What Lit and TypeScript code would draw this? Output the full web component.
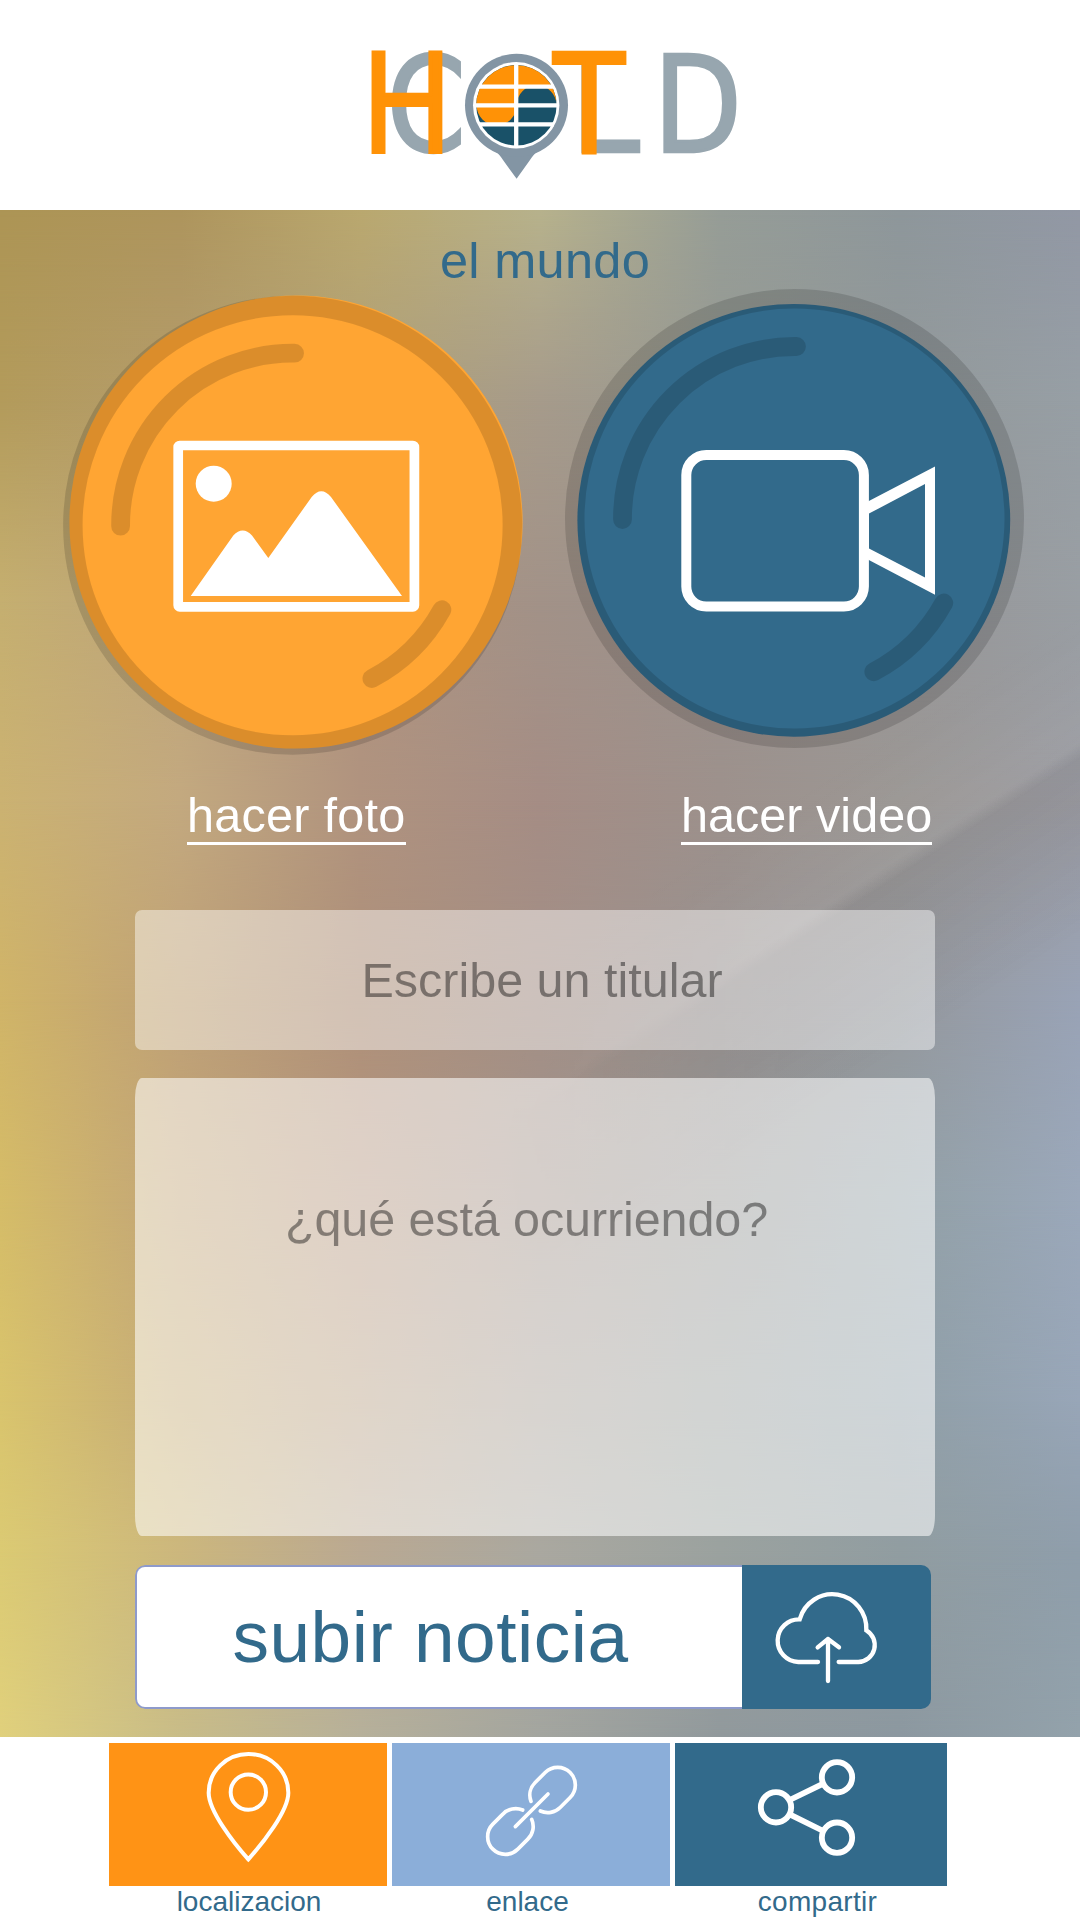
import { LitElement, html, css, svg } from "lit";
import { customElement, property } from "lit/decorators.js";
import { styleMap } from "lit/directives/style-map.js";

/* Colour rows of the backdrop: vertical position (px) and stops at every 1/6 of the width. */
const ROWS: { y: number; stops: string[] }[] = [
  { y: 0, stops: ["#ad9555", "#ae955d", "#baa86f", "#b7b28c", "#969d97", "#8e979b", "#9298a5"] },
  { y: 190, stops: ["#b39b5b", "#b49c6c", "#b0a078", "#a69b8b", "#979a93", "#93999a", "#979fa5"] },
  { y: 390, stops: ["#c5af70", "#bda47b", "#af937e", "#a29288", "#9a928e", "#979697", "#999ea3"] },
  { y: 590, stops: ["#cbb272", "#c3a97f", "#b0937f", "#a58d85", "#9d918c", "#9b9794", "#9b9ba1"] },
  { y: 790, stops: ["#d0b468", "#bfa176", "#ae9079", "#a38f86", "#979190", "#95989d", "#99a3b6"] },
  { y: 990, stops: ["#d5bc68", "#c2a578", "#b5967f", "#a2938a", "#969694", "#92a0a6", "#9ba8ba"] },
  { y: 1190, stops: ["#d9c46d", "#c6ac77", "#b8a084", "#a69d94", "#989e9c", "#909fa7", "#98a6b8"] },
  { y: 1340, stops: ["#dbca73", "#ccb77d", "#baa992", "#aaa8a0", "#9ba29f", "#919da1", "#8f9eab"] },
  { y: 1527, stops: ["#e0d07c", "#c8bc88", "#b6b09a", "#a3a59f", "#91999c", "#8c98a0", "#93a2ab"] },
];

@customElement("hc-backdrop")
export class HcBackdrop extends LitElement {
  static styles = css`
    :host { display: block; position: absolute; inset: 0; overflow: hidden; }
    .row { position: absolute; left: 0; right: 0; bottom: 0; }
    .edge { position: absolute; inset: 0; width: 1080px; height: 1527px; }
  `;
  render() {
    return html`
      ${ROWS.map((r, i) => {
        const from = i === 0 ? 0 : ROWS[i - 1].y;
        const mask = i === 0 ? "none" : `linear-gradient(to bottom, transparent 0, #000 ${r.y - from}px)`;
        return html`<div class="row" style=${styleMap({
          top: `${from}px`,
          background: `linear-gradient(to right, ${r.stops.join(",")})`,
          maskImage: mask,
        })}></div>`;
      })}
      <svg class="edge" viewBox="0 210 1080 1527">
        <defs>
          <linearGradient id="fall" gradientUnits="userSpaceOnUse" x1="859" y1="884" x2="948" y2="1021">
            <stop offset="0" stop-color="#20202c" stop-opacity="0" />
            <stop offset=".09" stop-color="#20202c" stop-opacity=".065" />
            <stop offset="1" stop-color="#20202c" stop-opacity="0" />
          </linearGradient>
          <linearGradient id="glow" gradientUnits="userSpaceOnUse" x1="867" y1="896" x2="800" y2="792">
            <stop offset="0" stop-color="#fff" stop-opacity="0" />
            <stop offset=".1" stop-color="#fff" stop-opacity=".04" />
            <stop offset="1" stop-color="#fff" stop-opacity="0" />
          </linearGradient>
          <linearGradient id="side" x1="500" x2="800" y1="0" y2="0" gradientUnits="userSpaceOnUse">
            <stop offset="0" stop-color="#000" /><stop offset="1" stop-color="#fff" />
          </linearGradient>
          <mask id="m" maskUnits="userSpaceOnUse" x="0" y="210" width="1080" height="1527">
            <rect x="0" y="210" width="1080" height="1527" fill="url(#side)" />
          </mask>
        </defs>
        <g mask="url(#m)">
          <rect x="400" y="500" width="700" height="1000" fill="url(#fall)" />
          <rect x="400" y="500" width="700" height="1000" fill="url(#glow)" />
        </g>
      </svg>`;
  }
}

@customElement("hc-logo")
export class HcLogo extends LitElement {
  static styles = css`
    :host { display: block; }
    svg { display: block; width: 380px; height: 140px; overflow: visible; }
    text { font-size: 138px; }
    .cold { font-family: "DejaVu Sans", sans-serif; fill: #97a6af; stroke: #97a6af; stroke-width: 2.8px; }
    .hot { font-family: "Open Sans", sans-serif; fill: #ff9206; stroke: #ff9206; stroke-width: 4px; }
  `;
  render() {
    return html`<svg viewBox="365 45 380 140">
      <g class="cold">
        <text transform="translate(386.800 151.200) scale(.822 .96)">C</text>
        <text transform="translate(570.500 151.700) scale(.9 .975)">L</text>
        <text transform="translate(653.300 151.700) scale(.835 .975)">D</text>
      </g>
      <g class="hot">
        <text transform="translate(361.200 151.500) scale(.9 1.01)">H</text>
        <text transform="translate(552.600 151.500) scale(.965 1.01)">T</text>
      </g>
      <path d="M495 151C499 154 501 157 503 160L516.6 178.7 530 160C532 157 534 154 538 151Z" fill="#8395a4" />
      <circle cx="516.5" cy="105.3" r="51.5" fill="#8395a4" />
      <circle cx="516.2" cy="105.3" r="43.2" fill="#fff" />
      <circle cx="516.4" cy="105.3" r="40.2" fill="#195168" />
      <path d="M476.2 105.3A40.2 40.2 0 0 1 556.6 105.3A20 20 0 0 0 516.6 105.3A20 20 0 0 1 476.6 105.3Z" fill="#ff9206" />
      <path d="M516.2 64V147M479 86.700H554M475 105.3H558M479 124.300H554" stroke="#fff" stroke-width="4.300" />
    </svg>`;
  }
}

@customElement("hc-capture")
export class HcCapture extends LitElement {
  @property() kind: "foto" | "video" = "foto";
  static styles = css`
    :host { display: flex; flex-direction: column; align-items: flex-start; width: 470px; }
    svg { display: block; width: 470px; height: 470px; }
    .label {
      margin-top: 29px; font-size: 48.6px; line-height: 54px; color: #fff;
      white-space: nowrap; border-bottom: 3px solid #fff;
    }
    .foto { margin-left: 129px; letter-spacing: 0.25px; }
    .video { margin-left: 121px; }
  `;
  private gloss(cx: number, cy: number) {
    return svg`<g transform="translate(${cx} ${cy})" fill="none" stroke="#000" stroke-opacity=".14">
      <circle r="219.75" stroke-width="19.5" />
      <path d="M-172 1A172 172 0 0 1 2-172M149.3 84.5A172 172 0 0 1 79.3 153.3" stroke-width="18.8" stroke-linecap="round" />
    </g>`;
  }
  render() {
    return this.kind === "foto"
      ? html`<svg viewBox="58 289 470 470">
            <circle cx="296" cy="522" r="226.6" fill="#ffa533" />
            ${this.gloss(292.6, 525.2)}
            <rect x="178.2" y="445.5" width="236.2" height="161.3" rx="1.5" fill="none" stroke="#fff" stroke-width="9.7" stroke-linejoin="round" />
            <circle cx="213.7" cy="483.7" r="18" fill="#fff" />
            <path d="M190.7 596 233.3 535.6Q242.7 525.5 252 535.6L268.3 558 311.7 497Q321.3 485.6 331 497L402 596Z" fill="#fff" />
          </svg>
          <div class="label foto">hacer foto</div>`
      : html`<svg viewBox="560 289 470 470">
            <circle cx="793.8" cy="520.3" r="216.4" fill="#326a8b" />
            ${this.gloss(794.5, 518.5)}
            <rect x="686.3" y="455" width="177.6" height="151.6" rx="20" fill="none" stroke="#fff" stroke-width="10" />
            <path d="M866 502.5 935 466.4V594.8L866 558.5ZM869 513.6V548.4L925 577.5V484Z" fill="#fff" fill-rule="evenodd" />
          </svg>
          <div class="label video">hacer video</div>`;
  }
}

@customElement("hc-tile")
export class HcTile extends LitElement {
  @property() kind = "";
  @property() label = "";
  static styles = css`
    :host { display: flex; flex-direction: column; }
    svg { display: block; width: 100%; height: 143px; }
    .pin { background: #ff9315; }
    .link { background: #8baed9; }
    .share { background: #326a8b; }
    .cap { text-align: center; font-size: 28px; line-height: 32px; color: #326a8b; white-space: nowrap; }
    .cap-pin { padding-left: 2px; }
    .cap-link { padding-right: 7px; }
    .cap-share { padding-left: 13px; letter-spacing: 0.3px; }
  `;
  private icon() {
    if (this.kind === "pin")
      return html`<svg class="pin" viewBox="57 24 834 429" fill="none" stroke="#fff" stroke-width="12">
        <path d="M475 373C432 325 356 228 356 173A119.500 116 0 0 1 595 173C595 228 518 325 475 373Z" />
        <circle cx="475" cy="171.500" r="53" />
      </svg>`;
    if (this.kind === "link")
      return html`<svg class="link" viewBox="-204 24 834 429" fill="none" stroke="#fff" stroke-width="11" stroke-linecap="round">
        <path d="M213 199A53 53 0 0 1 225.500 142.500L255.500 112.500A53 53 0 0 1 330.500 187.500L300.500 217.500A53 53 0 0 1 241 228" />
        <path d="M188 225A53 53 0 0 0 128.500 237.500L98.500 267.500A53 53 0 0 0 173.500 342.500L203.500 312.500A53 53 0 0 0 215 253" />
        <path d="M166 275 264 177" />
      </svg>`;
    return html`<svg class="share" viewBox="645 24 816 429" fill="none" stroke="#fff" stroke-width="17.500">
      <circle cx="948" cy="217" r="45.500" /><circle cx="1131" cy="127" r="45.500" /><circle cx="1131" cy="308" r="45.500" />
      <path d="M989 195 1090 146M989 238 1090 288" />
    </svg>`;
  }
  render() {
    return html`${this.icon()}<div class="cap cap-${this.kind}">${this.label}</div>`;
  }
}

@customElement("app-root")
export class AppRoot extends LitElement {
  static styles = css`
    :host {
      display: flex; flex-direction: column; width: 1080px; height: 1920px; overflow: hidden;
      background: #fff; font-family: "Liberation Sans", Arial, sans-serif;
    }
    header { box-sizing: border-box; height: 210px; padding: 45px 0 0 365px; }
    main { position: relative; box-sizing: border-box; height: 1527px; }
    .content { position: relative; display: flex; flex-direction: column; padding-top: 23px; }
    .section {
      padding-left: 10px; text-align: center; font-size: 50.500px; line-height: 56px;
      letter-spacing: 0.3px; color: #326a8b;
    }
    .captures { display: flex; gap: 32px; padding-left: 58px; height: 556px; }
    .field { box-sizing: border-box; margin-left: 135px; width: 800px; text-align: center; font-size: 48.500px; white-space: nowrap; }
    .headline {
      margin-top: 65px; height: 140px; line-height: 140px; border-radius: 7px; padding-left: 14px;
      background: rgba(255, 255, 255, 0.45); color: rgba(0, 0, 0, 0.42);
    }
    .story {
      margin-top: 28px; height: 457.500px; padding: 111px 17px 0 0; line-height: 60px;
      border-radius: 7px / 20px; letter-spacing: -0.1px;
      background: rgba(255, 255, 255, 0.56); color: rgba(0, 0, 0, 0.41);
    }
    .submit {
      display: flex; margin: 29.500px 0 0 135px; width: 796px; height: 144px;
      border-radius: 10px; overflow: hidden;
    }
    .submit-text {
      box-sizing: border-box; width: 607px; border: 2px solid #8e9acb; border-right: 0;
      border-radius: 10px 0 0 10px; background: #fff; color: #326a8b; text-align: center;
      font-size: 73px; line-height: 140px; letter-spacing: 0.500px; padding-right: 18px;
    }
    .submit-icon { display: block; width: 189px; height: 144px; background: #326a8b; }
    footer { display: grid; grid-template-columns: 278px 278px 272px; gap: 5px; padding: 6px 0 0 109px; }
  `;
  render() {
    return html`
      <header><hc-logo></hc-logo></header>
      <main>
        <hc-backdrop></hc-backdrop>
        <div class="content">
          <div class="section">el mundo</div>
          <div class="captures">
            <hc-capture kind="foto"></hc-capture>
            <hc-capture kind="video"></hc-capture>
          </div>
          <div class="field headline">Escribe un titular</div>
          <div class="field story">¿qué está ocurriendo?</div>
          <div class="submit">
            <div class="submit-text">subir noticia</div>
            <svg class="submit-icon" viewBox="36 30 567 432" fill="none" stroke="#fff" stroke-width="13" stroke-linecap="round">
              <path d="M264 321H205A64 64 0 0 1 209 193A102 104 0 0 1 409 226A51 51 0 0 1 385 321H326" />
              <path d="M294 378V252M263 277 294 252 327 277" stroke-linejoin="round" />
            </svg>
          </div>
        </div>
      </main>
      <footer>
        <hc-tile kind="pin" label="localizacion"></hc-tile>
        <hc-tile kind="link" label="enlace"></hc-tile>
        <hc-tile kind="share" label="compartir"></hc-tile>
      </footer>
    `;
  }
}
